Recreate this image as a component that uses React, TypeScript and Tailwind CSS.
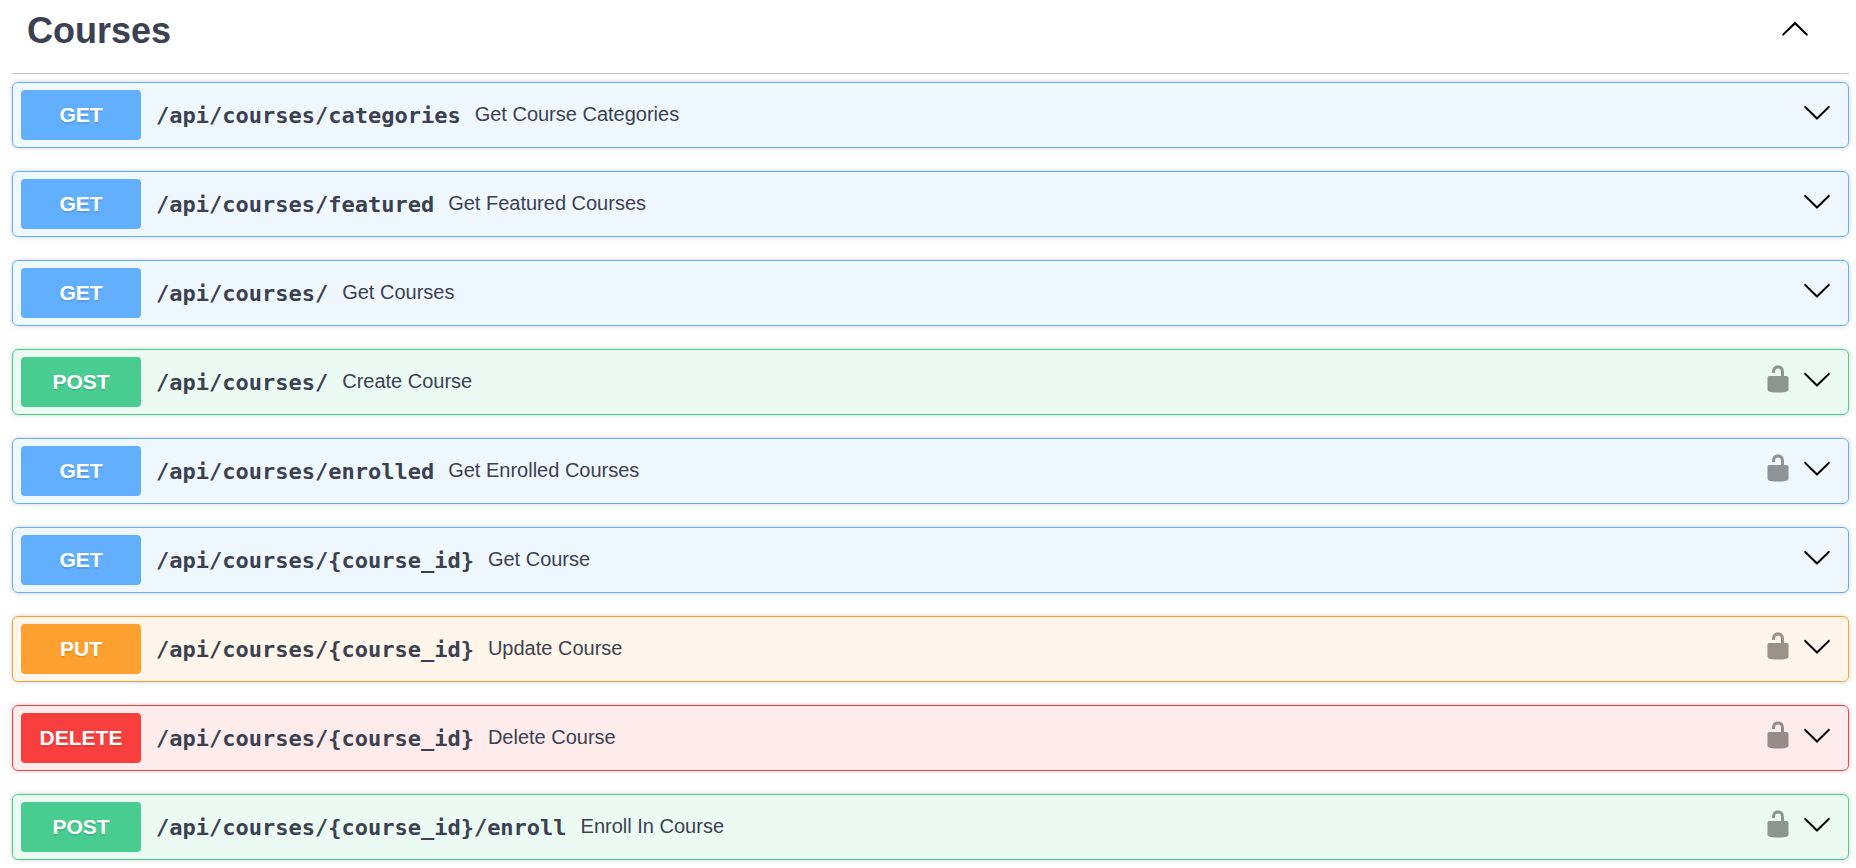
type Method = 'GET' | 'POST' | 'PUT' | 'DELETE'

interface Operation {
  method: Method
  path: string
  summary: string
  secured?: boolean
}

const operations: Operation[] = [
  { method: 'GET', path: '/api/courses/categories', summary: 'Get Course Categories' },
  { method: 'GET', path: '/api/courses/featured', summary: 'Get Featured Courses' },
  { method: 'GET', path: '/api/courses/', summary: 'Get Courses' },
  { method: 'POST', path: '/api/courses/', summary: 'Create Course', secured: true },
  { method: 'GET', path: '/api/courses/enrolled', summary: 'Get Enrolled Courses', secured: true },
  { method: 'GET', path: '/api/courses/{course_id}', summary: 'Get Course' },
  { method: 'PUT', path: '/api/courses/{course_id}', summary: 'Update Course', secured: true },
  { method: 'DELETE', path: '/api/courses/{course_id}', summary: 'Delete Course', secured: true },
  { method: 'POST', path: '/api/courses/{course_id}/enroll', summary: 'Enroll In Course', secured: true },
]

const rowStyles: Record<Method, string> = {
  GET: 'border-[#61affe] bg-[#61affe]/10',
  POST: 'border-[#49cc90] bg-[#49cc90]/10',
  PUT: 'border-[#fca130] bg-[#fca130]/10',
  DELETE: 'border-[#f93e3e] bg-[#f93e3e]/10',
}

const badgeStyles: Record<Method, string> = {
  GET: 'bg-[#61affe]',
  POST: 'bg-[#49cc90]',
  PUT: 'bg-[#fca130]',
  DELETE: 'bg-[#f93e3e]',
}

function ChevronUp() {
  return (
    <svg viewBox="0 0 20 20" className="size-[30px] fill-black" aria-hidden="true">
      <path d="M17.418 14.908c.272.268.709.268.979 0s.271-.701 0-.969l-7.908-7.83c-.27-.268-.707-.268-.979 0l-7.908 7.83c-.27.268-.27.701 0 .969.271.268.709.268.979 0L10 7.767l7.418 7.141z" />
    </svg>
  )
}

function ChevronDown() {
  return (
    <svg viewBox="0 0 20 20" className="size-[30px] fill-black" aria-hidden="true">
      <path d="M17.418 6.109c.272-.268.709-.268.979 0s.271.701 0 .969l-7.908 7.83c-.27.268-.707.268-.979 0l-7.908-7.83c-.27-.268-.27-.701 0-.969.271-.268.709-.268.979 0L10 13.25l7.418-7.141z" />
    </svg>
  )
}

function Unlocked() {
  return (
    <svg viewBox="0 0 20 20" className="size-[30px] fill-black" aria-hidden="true">
      <path d="M15.8 8H14V5.6C14 2.703 12.665 1 10 1 7.334 1 6 2.703 6 5.6V6h2v-.801C8 3.754 8.797 3 10 3c1.203 0 2 .754 2 2.199V8H4c-.553 0-1 .646-1 1.199V17c0 .549.428 1.139.951 1.307l1.197.387C5.672 18.861 6.55 19 7.1 19h5.8c.549 0 1.428-.139 1.951-.307l1.196-.387c.524-.167.953-.757.953-1.306V9.199C17 8.646 16.352 8 15.8 8z" />
    </svg>
  )
}

function OperationRow({ method, path, summary, secured }: Operation) {
  return (
    <li className={`flex items-center rounded-md border py-[7px] pr-4 pl-2 shadow-[0_0_5px_rgba(0,0,0,0.19)] ${rowStyles[method]}`}>
      <button type="button" className="flex min-w-0 flex-1 cursor-pointer items-center gap-[15px] text-left">
        <span
          className={`w-[120px] shrink-0 rounded-[4px] text-center text-[21px] leading-[50px] font-bold text-white [text-shadow:0_2px_0_rgba(0,0,0,0.1)] ${badgeStyles[method]}`}
        >
          {method}
        </span>
        <span className="flex min-w-0 flex-wrap items-center gap-x-3.5">
          <span className="pt-0.5 font-['DejaVu_Sans_Mono',monospace] text-[22px] leading-8 font-bold break-all">{path}</span>
          <span className="pb-0.5 text-[20px] leading-8">{summary}</span>
        </span>
      </button>
      <div className="flex gap-[9px] pb-1.5">
        {secured && (
          <button type="button" aria-label={`Authorize ${method} ${path}`} className="cursor-pointer opacity-40">
            <Unlocked />
          </button>
        )}
        <button type="button" aria-label={`Expand ${method} ${path}`} className="cursor-pointer">
          <ChevronDown />
        </button>
      </div>
    </li>
  )
}

export default function App() {
  return (
    <main className="bg-white pr-[7px] pb-2 pl-3 font-['Liberation_Sans',Arial,sans-serif] text-[#3b4151]">
      <section>
        <header className="flex items-center justify-between border-b border-[#3b4151]/30 pr-[39px] pb-[11px] pl-[15px]">
          <h2 className="text-[36px] leading-[62px] font-bold">Courses</h2>
          <button type="button" aria-label="Collapse Courses" className="cursor-pointer pb-1.5">
            <ChevronUp />
          </button>
        </header>
        <ul className="flex flex-col gap-[23px] pt-2">
          {operations.map((op) => (
            <OperationRow key={`${op.method} ${op.path}`} {...op} />
          ))}
        </ul>
      </section>
    </main>
  )
}
